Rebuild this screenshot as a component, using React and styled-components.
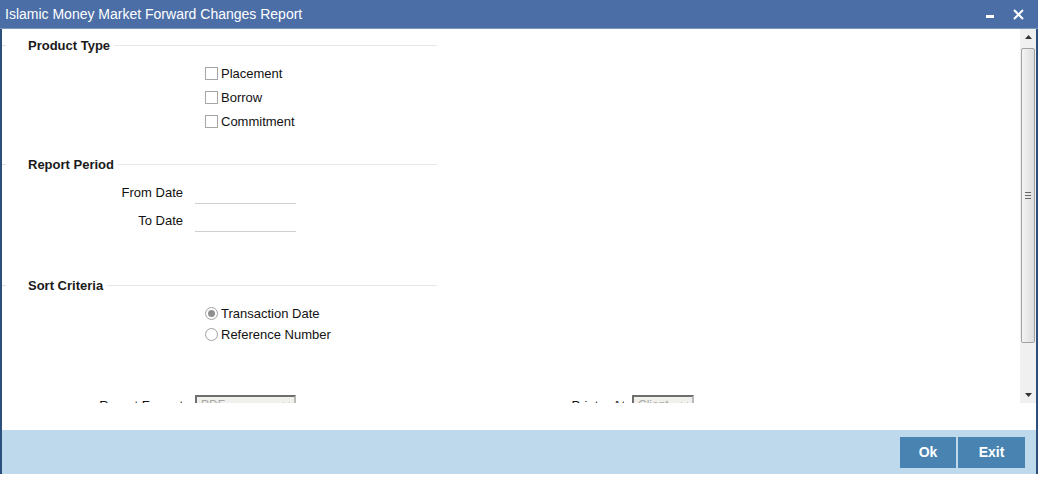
import React from "react";
import styled, { createGlobalStyle } from "styled-components";

const GlobalStyle = createGlobalStyle`
  html, body {
    margin: 0;
    padding: 0;
    background: #ffffff;
    font-family: "Liberation Sans", Arial, sans-serif;
  }
`;

const Window = styled.div`
  width: 1038px;
  height: 474px;
  box-sizing: border-box;
  border-left: 2px solid #2d4f7e;
  border-right: 2px solid #2d4f7e;
  display: flex;
  flex-direction: column;
  background: #ffffff;
`;

const TitleBar = styled.div`
  height: 28px;
  margin: 0 -2px;
  padding: 0 14px 0 5px;
  background: #4b6ea7;
  border-bottom: 1px solid #7f95b9;
  display: flex;
  align-items: center;
  justify-content: space-between;
  color: #ffffff;
  font-size: 14px;
`;

const TitleTools = styled.div`
  display: flex;
  align-items: center;
  gap: 19px;
`;

const Body = styled.div`
  height: 374px;
  display: flex;
  overflow: hidden;
`;

const Form = styled.div`
  flex: 1;
  padding-top: 8px;
  overflow: hidden;
`;

const SectionHead = styled.div`
  width: 435px;
  height: 16px;
  display: flex;
  align-items: center;
  margin-top: ${(p) => p.top}px;
  font-size: 13px;
  font-weight: bold;
  color: #1a1a1a;

  &::before {
    content: "";
    width: 4px;
    height: 1px;
    background: #e3e3e3;
    margin-right: 22px;
  }

  &::after {
    content: "";
    flex: 1;
    height: 1px;
    background: #e8e8e8;
    margin-left: 4px;
  }
`;

const OptionList = styled.div`
  margin-top: ${(p) => p.top}px;
  padding-left: 203px;
`;

const Option = styled.label`
  height: ${(p) => p.h}px;
  display: flex;
  align-items: center;
  gap: 3px;
  font-size: 13px;
  color: #111;
`;

const Box = styled.span`
  width: 11px;
  height: 11px;
  border: 1px solid #a6a6a6;
  background: #fff;
`;

const Radio = styled.span`
  width: 11px;
  height: 11px;
  border: 1px solid #a0a0a0;
  border-radius: 50%;
  background: #fff;
  display: flex;
  align-items: center;
  justify-content: center;

  &::after {
    content: "";
    display: ${(p) => (p.checked ? "block" : "none")};
    width: 7px;
    height: 7px;
    border-radius: 50%;
    background: #8f8f8f;
  }
`;

const FieldRow = styled.div`
  height: 28px;
  display: flex;
  align-items: center;
  margin-top: ${(p) => p.top || 0}px;
`;

const FieldLabel = styled.span`
  width: ${(p) => p.w || 181}px;
  text-align: right;
  font-size: 13px;
  color: #111;
`;

const DateInput = styled.div`
  width: 101px;
  height: 22px;
  margin-left: 12px;
  border-bottom: 1px solid #cfcfcf;
`;

const SelectRow = styled.div`
  height: 20px;
  display: flex;
  align-items: center;
  margin-top: 50px;
`;

const Select = styled.div`
  width: ${(p) => p.w}px;
  height: 20px;
  box-sizing: border-box;
  margin-left: ${(p) => p.gap}px;
  border: 2px solid #6e6e6e;
  border-right-color: #b9b9b9;
  background: #f1f0ec;
  display: flex;
  align-items: center;
  justify-content: space-between;
  padding: 0 3px 0 4px;
  font-size: 12px;
  color: #a8a8a8;
`;

const ScrollBar = styled.div`
  width: 16px;
  background: #f0f0f0;
  display: flex;
  flex-direction: column;
  align-items: center;
`;

const Arrow = styled.div`
  height: 16px;
  display: flex;
  align-items: center;
  justify-content: center;
`;

const Thumb = styled.div`
  width: 14px;
  height: 295px;
  margin-top: 3px;
  box-sizing: border-box;
  border: 1px solid #a2a2a2;
  border-radius: 2px;
  background: linear-gradient(to right, #f4f4f4, #dcdcdc);
  display: flex;
  align-items: center;
  justify-content: center;
`;

const Track = styled.div`
  flex: 1;
`;

const Spacer = styled.div`
  height: 27px;
`;

const Footer = styled.div`
  flex: 1;
  background: #bfd9ec;
  display: flex;
  justify-content: flex-end;
  align-items: center;
  gap: 2px;
  padding-right: 11px;
`;

const Button = styled.button`
  width: ${(p) => p.w}px;
  height: 31px;
  border: none;
  background: #4883b2;
  color: #ffffff;
  font-family: "Liberation Sans", Arial, sans-serif;
  font-size: 14px;
  font-weight: bold;
  padding: 0;
`;

const Chevron = () => (
  <svg width="9" height="6" viewBox="0 0 9 6">
    <path d="M1 1 L4.5 4.5 L8 1" stroke="#555" strokeWidth="1.4" fill="none" />
  </svg>
);

export default function App() {
  return (
    <>
      <GlobalStyle />
      <Window>
        <TitleBar>
          <span>Islamic Money Market Forward Changes Report</span>
          <TitleTools>
            <svg width="8" height="4" viewBox="0 0 8 4" style={{ marginTop: 6 }}>
              <rect width="8" height="3" fill="#fff" />
            </svg>
            <svg width="11" height="11" viewBox="0 0 11 11">
              <path d="M1 1 L10 10 M10 1 L1 10" stroke="#fff" strokeWidth="2" />
            </svg>
          </TitleTools>
        </TitleBar>
        <Body>
          <Form>
            <SectionHead top={0}>Product Type</SectionHead>
            <OptionList top={8}>
              <Option h={24}><Box />Placement</Option>
              <Option h={24}><Box />Borrow</Option>
              <Option h={24}><Box />Commitment</Option>
            </OptionList>

            <SectionHead top={23}>Report Period</SectionHead>
            <FieldRow top={6}>
              <FieldLabel>From Date</FieldLabel>
              <DateInput />
            </FieldRow>
            <FieldRow>
              <FieldLabel>To Date</FieldLabel>
              <DateInput />
            </FieldRow>

            <SectionHead top={43}>Sort Criteria</SectionHead>
            <OptionList top={10}>
              <Option h={21}><Radio checked />Transaction Date</Option>
              <Option h={21}><Radio />Reference Number</Option>
            </OptionList>

            <SelectRow>
              <FieldLabel>Report Format</FieldLabel>
              <Select w={101} gap={12}>PDF<Chevron /></Select>
              <FieldLabel w={329}>Printer At</FieldLabel>
              <Select w={62} gap={7}>Client<Chevron /></Select>
            </SelectRow>
          </Form>
          <ScrollBar>
            <Arrow>
              <svg width="7" height="4" viewBox="0 0 7 4">
                <path d="M0 4 L3.5 0 L7 4 Z" fill="#333" />
              </svg>
            </Arrow>
            <Thumb>
              <svg width="6" height="7" viewBox="0 0 6 7">
                <path d="M0 0.5 H6 M0 3.5 H6 M0 6.5 H6" stroke="#666" strokeWidth="1" />
              </svg>
            </Thumb>
            <Track />
            <Arrow>
              <svg width="7" height="4" viewBox="0 0 7 4">
                <path d="M0 0 L3.5 4 L7 0 Z" fill="#333" />
              </svg>
            </Arrow>
          </ScrollBar>
        </Body>
        <Spacer />
        <Footer>
          <Button w={56}>Ok</Button>
          <Button w={67}>Exit</Button>
        </Footer>
      </Window>
    </>
  );
}
